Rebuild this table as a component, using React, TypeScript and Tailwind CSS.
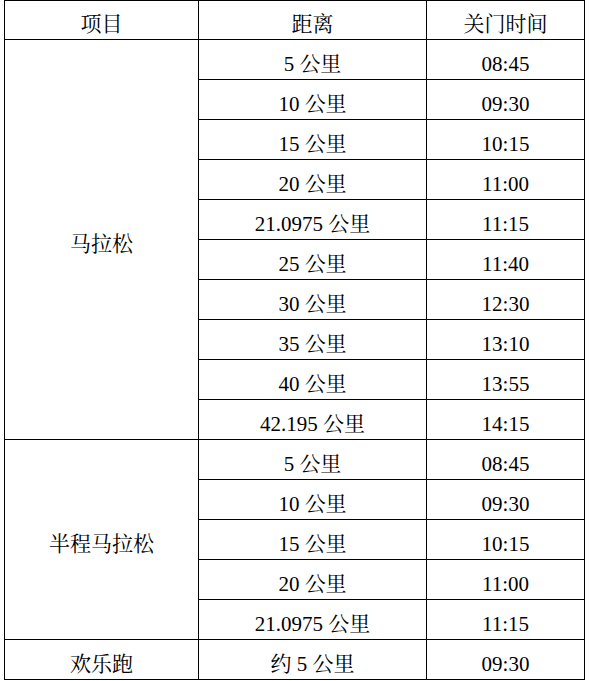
import React from 'react';

const marathon: [string, string][] = [
  ['5 公里', '08:45'],
  ['10 公里', '09:30'],
  ['15 公里', '10:15'],
  ['20 公里', '11:00'],
  ['21.0975 公里', '11:15'],
  ['25 公里', '11:40'],
  ['30 公里', '12:30'],
  ['35 公里', '13:10'],
  ['40 公里', '13:55'],
  ['42.195 公里', '14:15'],
];

const half: [string, string][] = [
  ['5 公里', '08:45'],
  ['10 公里', '09:30'],
  ['15 公里', '10:15'],
  ['20 公里', '11:00'],
  ['21.0975 公里', '11:15'],
];

const cell =
  "border border-black text-center align-middle p-0 pt-[8px] leading-[20px] text-[21px] text-black font-['Liberation_Serif','Noto_Serif_CJK_SC',serif]";

const Group: React.FC<{ name: string; rows: [string, string][] }> = ({ name, rows }) => (
  <>
    {rows.map(([dist, time], i) => (
      <tr key={dist} className="h-[40px]">
        {i === 0 && (
          <td rowSpan={rows.length} className={cell}>
            {name}
          </td>
        )}
        <td className={cell}>{dist}</td>
        <td className={cell}>{time}</td>
      </tr>
    ))}
  </>
);

export default function App() {
  return (
    <div className="w-[589px] h-[681px] bg-white pl-[4px]">
      <table className="table-fixed border-collapse">
        <colgroup>
          <col className="w-[194px]" />
          <col className="w-[228px]" />
          <col className="w-[158px]" />
        </colgroup>
        <tbody>
          <tr className="h-[39px]">
            <td className={cell}>项目</td>
            <td className={cell}>距离</td>
            <td className={cell}>关门时间</td>
          </tr>
          <Group name="马拉松" rows={marathon} />
          <Group name="半程马拉松" rows={half} />
          <tr className="h-[40px]">
            <td className={cell}>欢乐跑</td>
            <td className={cell}>约 5 公里</td>
            <td className={cell}>09:30</td>
          </tr>
        </tbody>
      </table>
    </div>
  );
}
